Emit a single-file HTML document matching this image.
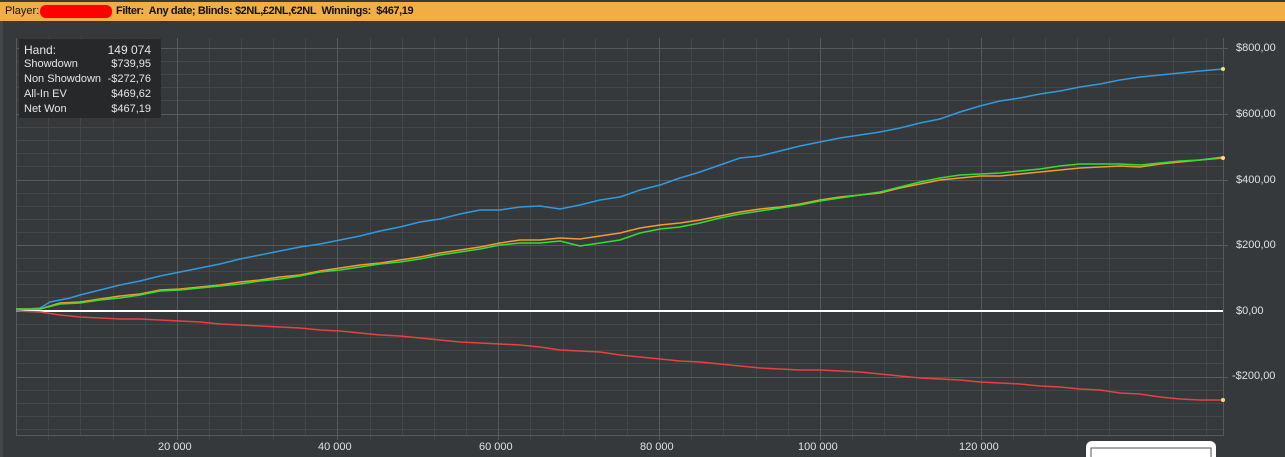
<!DOCTYPE html>
<html><head><style>
body{margin:0;width:1285px;height:457px;overflow:hidden;background:#36393c;font-family:"Liberation Sans",sans-serif;}
.hdr{position:absolute;left:0;top:0;width:1285px;height:21px;background:#f3ad45;border-top:2px solid #3a3a3a;box-sizing:border-box;font-size:11px;color:#111;line-height:18px;}
.hdr span{position:absolute;top:0;white-space:nowrap}
.stats{position:absolute;left:19px;top:39px;width:142px;height:79px;background:#26282a;color:#e6e6e6;font-size:11px;}
.stats div{position:absolute;left:5px;height:15px}
.stats b{font-weight:normal;position:absolute;right:5px}
.ax{position:absolute;color:#e0e0e0;font-size:11px;white-space:nowrap}
</style></head><body>
<div class="hdr"><span style="left:5px">Player:</span><span style="left:40px;top:3px;width:72px;height:13px;background:#f00;border-radius:6px"></span><span style="left:116px;font-weight:bold;letter-spacing:-0.4px">Filter:&nbsp; Any date; Blinds: $2NL,£2NL,€2NL&nbsp; Winnings:&nbsp; $467,19</span></div>
<svg width="1285" height="457" style="position:absolute;left:0;top:0">
<rect x="0" y="21" width="3" height="436" fill="#45484b"/>
<g stroke="#44474a" stroke-width="1">
<path d="M16 61.5H1223M16 74.5H1223M16 87.5H1223M16 100.5H1223M16 127.5H1223M16 140.5H1223M16 153.5H1223M16 166.5H1223M16 193.5H1223M16 206.5H1223M16 219.5H1223M16 232.5H1223M16 258.5H1223M16 271.5H1223M16 284.5H1223M16 297.5H1223M16 324.5H1223M16 337.5H1223M16 350.5H1223M16 363.5H1223M16 390.5H1223M16 403.5H1223M16 416.5H1223M16 429.5H1223"/>
<path d="M48.5 38V440M80.5 38V435M113.5 38V440M145.5 38V435M209.5 38V440M241.5 38V435M273.5 38V440M305.5 38V435M370.5 38V440M402.5 38V435M434.5 38V440M466.5 38V435M530.5 38V440M563.5 38V435M595.5 38V440M627.5 38V435M691.5 38V440M723.5 38V435M756.5 38V440M788.5 38V435M852.5 38V440M884.5 38V435M916.5 38V440M948.5 38V435M1013.5 38V440M1045.5 38V435M1077.5 38V440M1109.5 38V435M1173.5 38V440M1206.5 38V435"/>
</g>
<g stroke="#575a5d" stroke-width="1" fill="none">
<path d="M16 48.5H1228M16 114.5H1228M16 180.5H1228M16 245.5H1228M16 377.5H1228"/>
<path d="M177.5 38V440M337.5 38V440M498.5 38V440M659.5 38V440M820.5 38V440M981.5 38V440"/>
<path d="M16.5 38V435.5H1223.5V38"/>
</g>
<path d="M16 311H1223" stroke="#fff" stroke-width="2"/>
<polyline fill="none" stroke="#e84040" stroke-width="1.5" points="16,311 40,312 60,315 80,317 100,318 120,319 140,319 160,320 180,321 200,322 220,324 240,325 260,326 280,327 300,328 320,330 340,331 360,333 380,335 400,336 420,338 440,340 460,342 480,343 500,344 520,345 540,347 560,350 580,351 600,352 620,355 640,357 660,359 680,361 700,362 720,364 740,366 760,368 780,369 800,370 820,370 840,371 860,372 880,374 900,376 920,378 940,379 960,380 980,382 1000,383 1020,384 1040,386 1060,387 1080,389 1100,390 1120,393 1140,394 1160,397 1180,399 1200,400 1210,400 1223,400"/>
<polyline fill="none" stroke="#3399dd" stroke-width="1.5" points="16,310 40,308 50,302 60,300 70,298 80,295 100,290 120,285 140,281 160,276 180,272 200,268 220,264 240,259 260,255 280,251 300,247 320,244 340,240 360,236 380,231 400,227 420,222 440,219 460,214 480,210 500,210 520,207 540,206 560,209 580,205 600,200 620,197 640,190 660,185 680,178 700,172 720,165 740,158 760,156 780,151 800,146 820,142 840,138 860,135 880,132 900,128 920,123 940,119 960,112 980,106 1000,101 1020,98 1040,94 1060,91 1080,87 1100,84 1120,80 1140,77 1160,75 1180,73 1200,71 1223,69"/>
<polyline fill="none" stroke="#f29a2e" stroke-width="1.5" points="16,309 40,309 60,303 80,302 100,299 120,296 140,294 160,290 180,289 200,287 220,285 240,282 260,280 280,277 300,275 320,271 340,268 360,265 380,263 400,260 420,257 440,253 460,250 480,247 500,243 520,240 540,240 560,238 580,239 600,236 620,233 640,228 660,225 680,223 700,220 720,216 740,212 760,209 780,207 800,204 820,200 840,197 860,195 880,193 900,188 920,184 940,180 960,178 980,176 1000,176 1020,174 1040,172 1060,170 1080,168 1100,167 1120,166 1140,167 1160,164 1180,162 1200,160 1223,158"/>
<polyline fill="none" stroke="#33dd33" stroke-width="1.5" points="16,309 40,309 60,304 80,303 100,300 120,298 140,295 160,291 180,290 200,288 220,286 240,284 260,281 280,279 300,276 320,272 340,270 360,267 380,264 400,262 420,259 440,255 460,252 480,249 500,245 520,243 540,243 560,241 580,246 600,243 620,240 640,233 660,229 680,227 700,223 720,218 740,214 760,211 780,208 800,205 820,201 840,198 860,195 880,192 900,187 920,182 940,178 960,175 980,174 1000,173 1020,171 1040,169 1060,166 1080,164 1100,164 1120,164 1140,165 1160,163 1180,161 1200,160 1223,157"/>
<circle cx="1223" cy="69" r="2" fill="#f5e07a"/><circle cx="1223" cy="158" r="2" fill="#f5e07a"/><circle cx="1223" cy="400" r="2" fill="#f5e07a"/>
<rect x="1086" y="441" width="130" height="30" rx="6" fill="#fff"/>
<rect x="1091" y="448" width="120" height="20" fill="none" stroke="#555"/>
</svg>
<div class="stats">
<div style="top:4px;font-size:12px;width:132px">Hand:<b>149 074</b></div>
<div style="top:19px;width:132px">Showdown<b>$739,95</b></div>
<div style="top:34px;width:132px">Non Showdown<b>-$272,76</b></div>
<div style="top:49px;width:132px">All-In EV<b>$469,62</b></div>
<div style="top:64px;width:132px">Net Won<b>$467,19</b></div>
</div>
<div class="ax" style="left:1236px;top:42px">$800,00</div>
<div class="ax" style="left:1236px;top:108px">$600,00</div>
<div class="ax" style="left:1236px;top:174px">$400,00</div>
<div class="ax" style="left:1236px;top:239px">$200,00</div>
<div class="ax" style="left:1236px;top:305px">$0,00</div>
<div class="ax" style="left:1232px;top:370px">-$200,00</div>
<div class="ax" style="left:158px;top:441px">20 000</div>
<div class="ax" style="left:318px;top:441px">40 000</div>
<div class="ax" style="left:479px;top:441px">60 000</div>
<div class="ax" style="left:640px;top:441px">80 000</div>
<div class="ax" style="left:798px;top:441px">100 000</div>
<div class="ax" style="left:959px;top:441px">120 000</div>
</body></html>
